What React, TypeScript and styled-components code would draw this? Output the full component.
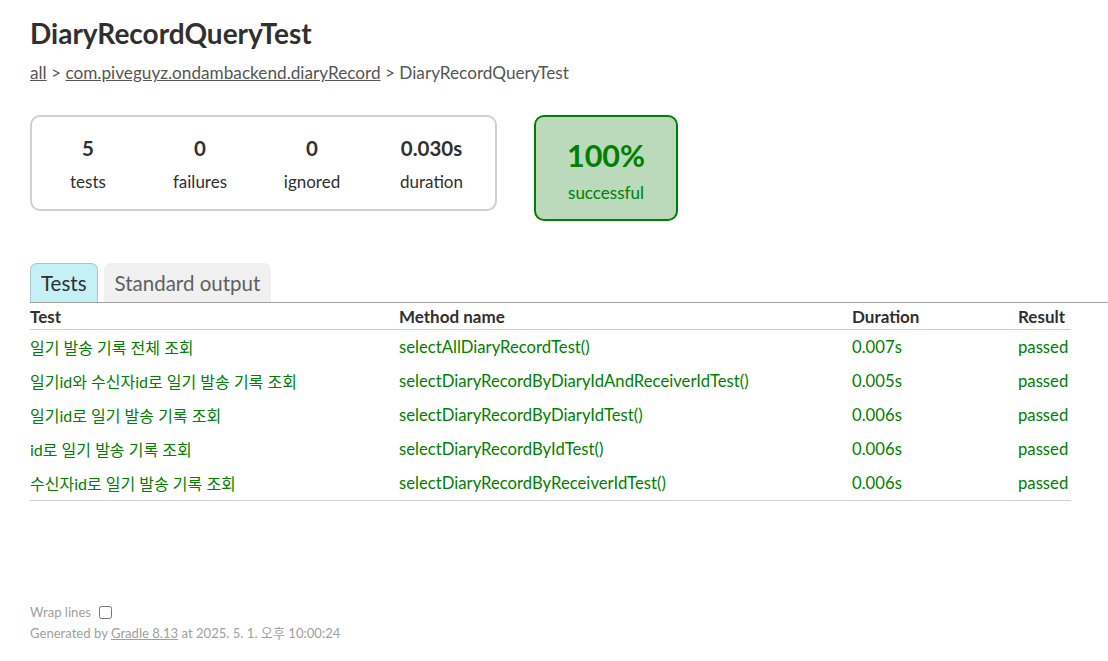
import React from "react";
import styled, { createGlobalStyle } from "styled-components";

const Global = createGlobalStyle`
  html, body { margin: 0; padding: 0; background: #ffffff; }
  body {
    font-family: Lato, "Noto Sans CJK KR", sans-serif;
    font-size: 17px;
    color: #303030;
  }
`;

const Content = styled.div`
  padding: 18px 0 0 30px;
`;

const Title = styled.h1`
  margin: 0;
  font-size: 28px;
  line-height: 30px;
  font-weight: 700;
  white-space: nowrap;
`;

const Breadcrumbs = styled.div`
  margin-top: 15px;
  line-height: 20px;
  font-size: 17.2px;
  color: #555555;
  a { color: #555555; text-decoration: underline; }
`;

const SummaryRow = styled.div`
  margin-top: 32px;
  display: flex;
  align-items: flex-start;
  gap: 37px;
`;

const SummaryGroup = styled.div`
  display: flex;
  border: solid 2px #d0d0d0;
  border-radius: 10px;
  width: 463px;
`;

const InfoBox = styled.div<{ $wide?: boolean }>`
  width: ${(p) => (p.$wide ? 127 : 112)}px;
  padding: 18px 0 14px;
  text-align: center;
`;

const Counter = styled.div`
  font-size: 20.5px;
  line-height: 26px;
  font-weight: 700;
  margin-bottom: 8px;
`;

const Label = styled.div`
  line-height: 26px;
`;

const SuccessRate = styled.div`
  width: 140px;
  border: solid 2px #008000;
  border-radius: 10px;
  background: #bbd9bb;
  color: #008000;
  text-align: center;
  padding: 21px 0 13px;
`;

const Percent = styled.div`
  font-size: 30.5px;
  line-height: 34px;
  font-weight: 700;
  margin-bottom: 8px;
`;

const TabStrip = styled.ul`
  margin: 42px 0 0;
  padding: 0;
  list-style: none;
  display: flex;
  gap: 6px;
  border-bottom: solid 1px #a0a0a0;
`;

const Tab = styled.li<{ $selected?: boolean }>`
  padding: 7px 10px;
  font-size: 20.5px;
  line-height: 24px;
  border: solid 1px ${(p) => (p.$selected ? "#a8c8cc" : "#f0f0f0")};
  border-bottom: none;
  border-radius: 7px 7px 0 0;
  background: ${(p) => (p.$selected ? "#c5f0f5" : "#f0f0f0")};
  color: ${(p) => (p.$selected ? "#303030" : "#606060")};
`;

const Table = styled.div`
  width: 1041px;
  border-bottom: solid 1px #d0d0d0;
`;

const Cols = `
  display: grid;
  grid-template-columns: 369px 453px 166px 53px;
  white-space: nowrap;
`;

const HeadRow = styled.div`
  ${Cols}
  height: 26px;
  align-items: center;
  font-weight: 700;
  border-bottom: solid 1px #d0d0d0;
`;

const Row = styled.div`
  ${Cols}
  height: 34px;
  align-items: center;
  font-size: 16.7px;
  color: #008000;
`;

const TestName = styled.div`
  font-size: 16px;
`;

const Footer = styled.div`
  margin-top: 101px;
  font-size: 13.1px;
  line-height: 21px;
  color: #a0a0a0;
  white-space: nowrap;
  a { color: #a0a0a0; }
`;

const WrapLabel = styled.label`
  display: flex;
  align-items: center;
  gap: 5px;
`;

const Check = styled.input`
  margin: 0 0 0 3px;
  width: 13px;
  height: 13px;
`;

const rows = [
  ["일기 발송 기록 전체 조회", "selectAllDiaryRecordTest()", "0.007s"],
  ["일기id와 수신자id로 일기 발송 기록 조회", "selectDiaryRecordByDiaryIdAndReceiverIdTest()", "0.005s"],
  ["일기id로 일기 발송 기록 조회", "selectDiaryRecordByDiaryIdTest()", "0.006s"],
  ["id로 일기 발송 기록 조회", "selectDiaryRecordByIdTest()", "0.006s"],
  ["수신자id로 일기 발송 기록 조회", "selectDiaryRecordByReceiverIdTest()", "0.006s"],
];

export default function App() {
  return (
    <>
      <Global />
      <Content>
        <Title>DiaryRecordQueryTest</Title>
        <Breadcrumbs>
          <a href="#">all</a> &gt; <a href="#">com.piveguyz.ondambackend.diaryRecord</a> &gt; DiaryRecordQueryTest
        </Breadcrumbs>
        <SummaryRow>
          <SummaryGroup>
            <InfoBox>
              <Counter>5</Counter>
              <Label>tests</Label>
            </InfoBox>
            <InfoBox>
              <Counter>0</Counter>
              <Label>failures</Label>
            </InfoBox>
            <InfoBox>
              <Counter>0</Counter>
              <Label>ignored</Label>
            </InfoBox>
            <InfoBox $wide>
              <Counter>0.030s</Counter>
              <Label>duration</Label>
            </InfoBox>
          </SummaryGroup>
          <SuccessRate>
            <Percent>100%</Percent>
            <Label>successful</Label>
          </SuccessRate>
        </SummaryRow>
        <TabStrip>
          <Tab $selected>Tests</Tab>
          <Tab>Standard output</Tab>
        </TabStrip>
        <Table>
          <HeadRow>
            <div>Test</div>
            <div>Method name</div>
            <div>Duration</div>
            <div>Result</div>
          </HeadRow>
          {rows.map((r) => (
            <Row key={r[1]}>
              <TestName>{r[0]}</TestName>
              <div>{r[1]}</div>
              <div>{r[2]}</div>
              <div>passed</div>
            </Row>
          ))}
        </Table>
        <Footer>
          <WrapLabel>
            Wrap lines
            <Check type="checkbox" />
          </WrapLabel>
          <div>
            Generated by <a href="#">Gradle 8.13</a> at 2025. 5. 1. 오후 10:00:24
          </div>
        </Footer>
      </Content>
    </>
  );
}
